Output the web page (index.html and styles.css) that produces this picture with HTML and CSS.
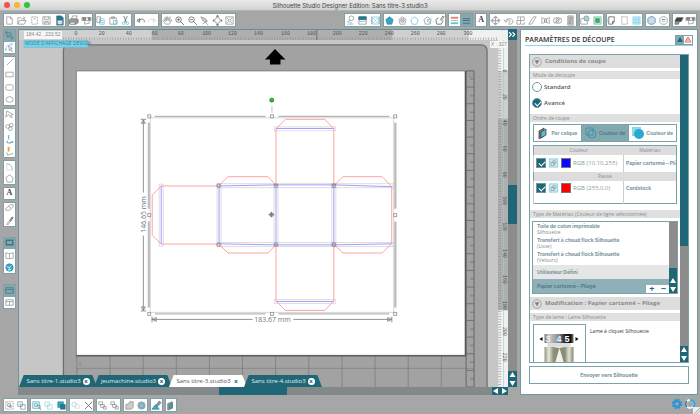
FILE: index.html
```html
<!DOCTYPE html>
<html lang="fr">
<head>
<meta charset="utf-8">
<title>Silhouette Studio Designer Edition: Sans titre-3.studio3</title>
<link rel="stylesheet" href="styles.css">
</head>
<body>
<svg class="defs" aria-hidden="true">
  <symbol id="new" viewBox="0 0 12 12"><path d="M3 2h4l2 2v6H3zM7 2v2h2"/></symbol>
  <symbol id="open" viewBox="0 0 12 12"><path d="M2 10V3h3l1 1h3v2M2 10l2-4h7l-2 4zM8 2l2 1"/></symbol>
  <symbol id="card" viewBox="0 0 12 12"><path d="M3 2h6v8H3z" stroke-dasharray="2 1"/><path d="M5 4h2"/></symbol>
  <symbol id="save" viewBox="0 0 12 12"><path d="M2 2h8v8H2zM4 2v3h4V2M4 10V7h4v3"/><path class="cy" d="M4 8h4"/></symbol>
  <symbol id="sd" viewBox="0 0 12 12"><path class="ft" d="M3 1h5l2 2v8H3z"/><path class="fw" d="M4 6h5v4H4z"/><path class="cy" d="M5 8h3"/></symbol>
  <symbol id="print" viewBox="0 0 12 12"><path class="fg" d="M1 6l2-2h7l1 1v3l-2 2H2z"/><path class="fw" d="M4 4l1-3h5L9 4zM3 8h5l-1 2H2z"/></symbol>
  <symbol id="cutter" viewBox="0 0 12 12"><path d="M1 3h10v3H1zM4 6v4l5-1V6"/><path class="fg" d="M2 3h3v2H2zM8 3h2v2H8z"/></symbol>
  <symbol id="copy" viewBox="0 0 12 12"><path d="M2 2h4v6H2z"/><path class="cy" d="M5 4h4l1 1v5H5zM6 6h3M6 8h3"/></symbol>
  <symbol id="paste" viewBox="0 0 12 12"><path d="M2 3h7v7H2zM4 2h3v2H4z"/><path class="cy" d="M6 6h4v4H6z"/></symbol>
  <symbol id="cut" viewBox="0 0 12 12"><path class="dk" d="M4 1l3 7M8 1L5 8"/><circle class="cy" cx="4" cy="9" r="1.4"/><circle class="cy" cx="8" cy="9" r="1.4"/></symbol>
  <symbol id="undo" viewBox="0 0 12 12"><path class="dk" d="M5 4L2 6l3 2zM4 6c4-3 7-1 6 2"/></symbol>
  <symbol id="redo" viewBox="0 0 12 12"><path class="lt" d="M7 4l3 2-3 2zM8 6C4 3 1 5 2 8"/></symbol>
  <symbol id="hand" viewBox="0 0 12 12"><path d="M4 10L1 6l1-1 2 2-1-4h1l1 3V2h1l.5 4L8 2l1 .5L8 7l2-2 .6.6L8 10z"/></symbol>
  <symbol id="zin" viewBox="0 0 12 12"><circle class="dk" cx="5" cy="5" r="3"/><path class="dk" d="M7 7l4 4M3.500 5h3M5 3.500v3"/></symbol>
  <symbol id="zout" viewBox="0 0 12 12"><circle class="dk" cx="5" cy="5" r="3"/><path class="dk" d="M7 7l4 4M3.500 5h3"/></symbol>
  <symbol id="zsel" viewBox="0 0 12 12"><path class="fl" d="M2 2l5 2 2 3-2 1-3-2z"/><path d="M7 8l3 3M9 6l-5 4"/></symbol>
  <symbol id="drag" viewBox="0 0 12 12"><circle cx="6" cy="6" r="3"/><path class="fg" d="M6 0l1 2H5zM6 12l1-2H5zM1 6l1-1v2zM11 6l-1-1v2z"/></symbol>
  <symbol id="fit" viewBox="0 0 12 12"><path d="M2 2h8v8H2zM3 3l2 2M9 3L7 5M3 9l2-2M9 9L7 7"/><circle cx="6" cy="6" r="1.500"/></symbol>
  <symbol id="lamp" viewBox="0 0 12 12"><circle cx="7" cy="3.500" r="2.500"/><path d="M6 6L3 7l2 2"/><path class="cy" d="M2 10h7M5 8l3 1"/></symbol>
  <symbol id="grad" viewBox="0 0 12 12"><path class="fw" d="M2 2h8v8H2z"/><path class="ft" d="M2 2h8v3H2z"/><path class="cy" d="M2 7h8"/></symbol>
  <symbol id="pat" viewBox="0 0 12 12"><path class="cy" d="M2 2h8v8H2zM2 6l4-4M2 10l8-8M6 10l4-4M2 2l8 8M6 2l4 4M2 6l4 4" stroke-width=".5"/><path d="M2 2v8M10 2v8"/></symbol>
  <symbol id="pfill" viewBox="0 0 12 12"><path class="fc" d="M6 2l4 3-1.500 5h-5L2 5z"/></symbol>
  <symbol id="pent" viewBox="0 0 12 12"><path d="M6 2l4 3-1.500 5h-5L2 5z"/></symbol>
  <symbol id="pcyan" viewBox="0 0 12 12"><path class="cy" d="M6 2l4 3-1.500 5h-5L2 5z"/></symbol>
  <symbol id="pdot" viewBox="0 0 12 12"><path d="M6 2l4 3-1.500 5h-5L2 5z"/><circle class="fl" cx="6" cy="6" r="2"/></symbol>
  <symbol id="pcur" viewBox="0 0 12 12"><path d="M6 2l4 3-1.500 5h-5L2 5z"/><path class="cy" d="M6 5l4 5M6 5v3M6 5h3"/></symbol>
  <symbol id="ppen" viewBox="0 0 12 12"><path class="dk" d="M5 3L2 5l1 5h5l2-4M7 5l3-4 1 1-3 4z"/></symbol>
  <symbol id="cols" viewBox="0 0 12 12"><path stroke="#f07a6a" stroke-width="2" d="M2 3h8"/><path stroke="#68cf78" d="M2 6h8"/><path class="cy" stroke-width="2" d="M2 9h8"/></symbol>
  <symbol id="lines" viewBox="0 0 12 12"><path stroke="#38616a" d="M2 4h8M2 6h8M2 9h8"/></symbol>
  <symbol id="move" viewBox="0 0 12 12"><path class="fl" d="M6 1l2 2H4zM6 11l2-2H4zM1 6l2-2v4zM11 6L9 4v4z"/><path d="M6 3v6M3 6h6"/></symbol>
  <symbol id="rot" viewBox="0 0 12 12"><path d="M3 7a4 3 0 1 1 3 3M1 5l2 3 2-2M5 5l3 2-2 2"/></symbol>
  <symbol id="scale" viewBox="0 0 12 12"><path d="M2 6h4v4H2zM6 2h4v4H6zM3 5V2h2M7 10h3V8"/></symbol>
  <symbol id="shear" viewBox="0 0 12 12"><path d="M2 10L7 2h3L5 10z"/></symbol>
  <symbol id="align" viewBox="0 0 12 12"><path d="M2 2v8M10 2v8M3 3l2 2v3L3 9M9 3L7 5v3l2 1M5 4h2v4H5z"/></symbol>
  <symbol id="dup" viewBox="0 0 12 12"><circle cx="4.500" cy="6" r="3"/><circle cx="7.500" cy="6" r="3"/><path d="M3 8l6-4"/></symbol>
  <symbol id="nest" viewBox="0 0 12 12"><path d="M3 1h6v10H3z"/><path class="fl" d="M4 2h2v3H4zM6 6h2v4H6zM7 2h1v3H7zM4 6h1v4H4z"/></symbol>
  <symbol id="weld" viewBox="0 0 12 12"><circle class="fb" cx="8" cy="4" r="3"/><path class="fw" d="M2 4h4v2h3v4H2z"/></symbol>
  <symbol id="offset" viewBox="0 0 12 12"><path fill="#e5ed75" stroke="#53c6c7" d="M2 2h8v8H2z"/><path class="fc" d="M4 4h4v4H4z"/></symbol>
  <symbol id="page" viewBox="0 0 12 12"><path class="dk" d="M3 10V2h6v5L7 10zM7 10V7h2"/><path class="cy" d="M2 4v4"/></symbol>
  <symbol id="marks" viewBox="0 0 12 12"><path d="M3 2h6v8H3z" stroke-dasharray="2 1"/></symbol>
  <symbol id="grid" viewBox="0 0 12 12"><path fill="#bfeaf7" stroke="#8fd8ee" d="M2 2h8v8H2zM5 2v8M8 2v8M2 5h8M2 8h8"/></symbol>
  <symbol id="mask" viewBox="0 0 12 12"><path fill="#c5dfef" stroke="#5b7895" d="M4 2h4l2 2v4l-2 2H4L2 8V4z"/></symbol>
  <symbol id="library" viewBox="0 0 12 12"><path d="M4 2h4l2 2v4l-2 2H4L2 8V4z"/><path class="cy" d="M4 7h4"/><path class="dk" d="M4 5h4"/></symbol>
  <symbol id="blade" viewBox="0 0 12 12"><path class="fk" d="M4 3h7L9 7H2z"/><path class="fg" d="M3 7h4l-1 3H2z"/></symbol>
  <symbol id="arrow" viewBox="0 0 12 12"><path d="M2 2l6 2-1 1 3 4-1 1-4-4-1 2z" stroke="#4b6e76"/></symbol>
  <symbol id="node" viewBox="0 0 12 12"><path class="cy" d="M2 9c0-5 2-6 7-6M2 7v3M7 2h3"/><path d="M5 4l4 3-2 .5 2 3-2-2-1 1z"/></symbol>
  <symbol id="line" viewBox="0 0 12 12"><path d="M3 9l7-7"/></symbol>
  <symbol id="rect" viewBox="0 0 12 12"><path d="M2 3.500h8v5H2z"/></symbol>
  <symbol id="rrect" viewBox="0 0 12 12"><rect x="2" y="3" width="8" height="6" rx="2"/></symbol>
  <symbol id="oval" viewBox="0 0 12 12"><ellipse cx="6" cy="6" rx="4" ry="3"/></symbol>
  <symbol id="poly" viewBox="0 0 12 12"><path d="M3 2l7 4-3 1 2 2H7L5 6 2 9z"/></symbol>
  <symbol id="curve" viewBox="0 0 12 12"><circle cx="8" cy="4.500" r="2"/><circle cx="4" cy="6" r="2"/><circle cx="7" cy="8.500" r="2"/></symbol>
  <symbol id="pen1" viewBox="0 0 12 12"><path class="cy" stroke-width="1.500" d="M5 6V1M3 9h1M6 10l4-2"/><path d="M3 7l1 3 6-1"/></symbol>
  <symbol id="pen2" viewBox="0 0 12 12"><path stroke="#f0a030" stroke-width="2" d="M5 6V1"/><path d="M3 7l1 3 6-2"/></symbol>
  <symbol id="arc" viewBox="0 0 12 12"><path d="M3 3c4 0 6 3 6 7"/><path class="lt" d="M3 3v7h6"/></symbol>
  <symbol id="erase" viewBox="0 0 12 12"><path d="M2 7l5-4h3v2L6 9H2zM5 5l3 2"/></symbol>
  <symbol id="knife" viewBox="0 0 12 12"><path class="fg" d="M6 6l3-4 1 1-3 4z"/><path d="M6 6l-3 4 1 1 3-4"/></symbol>
  <symbol id="win" viewBox="0 0 12 12"><path stroke="#47727b" stroke-width="1.500" d="M2.500 3.500h7v5h-7z"/></symbol>
  <symbol id="book" viewBox="0 0 12 12"><path d="M2 3l4 1 4-1v6l-4 .5L2 9zM6 4v5"/></symbol>
  <symbol id="store" viewBox="0 0 12 12"><circle class="fc" cx="6" cy="6" r="4"/><path stroke="#fff" d="M3 5l3 1 2-2M6 6l-1 3 3-1"/></symbol>
  <symbol id="one" viewBox="0 0 12 12"><path stroke="#47727b" d="M2 3h8v6H2zM2 5h8"/></symbol>
  <symbol id="two" viewBox="0 0 12 12"><path d="M2 3h8v6H2zM2 5h8M6 5v4"/></symbol>
  <symbol id="grp" viewBox="0 0 12 12"><path d="M2 2h8v8H2z" stroke-dasharray="2 1"/><path d="M4 4h3v3H4zM6 6h2v2H6z"/></symbol>
  <symbol id="ungrp" viewBox="0 0 12 12"><path d="M2 2h5v5H2zM5 5h5v5H5z"/><path class="cy" d="M1 5h9M5 2v8" stroke-dasharray="1 1"/></symbol>
  <symbol id="selall" viewBox="0 0 12 12"><path class="ct" d="M2 2h7v7H2zM4 4h3v3H4zM8 8l3 3M6 6h4v4"/></symbol>
  <symbol id="desel" viewBox="0 0 12 12"><path stroke="#9ed5e2" d="M2 2h5v5H2zM5 5h5v5H5z"/></symbol>
  <symbol id="selcol" viewBox="0 0 12 12"><path class="fc" d="M2 2h6v6H2z"/><path class="ft" d="M5 5h5v5H5z"/></symbol>
  <symbol id="merge" viewBox="0 0 12 12"><circle cx="4.500" cy="5" r="2.500" stroke="#9ed5e2"/><path class="lt" d="M6 4l4 1v4H6z"/></symbol>
  <symbol id="x" viewBox="0 0 12 12"><path class="dk" d="M2 2l8 8M10 2l-8 8"/></symbol>
  <symbol id="front" viewBox="0 0 12 12"><path d="M2 2h4v3H2zM4 5h4v3H4zM7 7h3v3H7z"/></symbol>
  <symbol id="shape" viewBox="0 0 12 12"><path class="fl" d="M2 5l3-1 1-2h4v6l-2 2H2z"/></symbol>
  <symbol id="disc" viewBox="0 0 12 12"><circle cx="6" cy="6" r="4" fill="#80cce0"/><path d="M4 4h4v4H4z"/></symbol>
  <symbol id="trace" viewBox="0 0 12 12"><path class="fc" d="M1 10l4-5 4 5z"/><path class="fg" d="M6 5l3-4 2 2-4 4z"/></symbol>
  <symbol id="layer" viewBox="0 0 12 12"><path class="fg" d="M3 4l5-2v7l-5 2z"/><path class="fc" d="M5 5l3-1v4L5 9z"/></symbol>
  <symbol id="sketch" viewBox="0 0 12 12"><path class="cy" d="M1 1h10v10H1z" fill="#c9edf7"/><path d="M3 5h4v4H3z"/><circle cx="7" cy="5" r="2"/></symbol>
</svg>

<header class="titlebar">
  <div class="lights"><i class="red"></i><i class="yellow"></i><i class="green"></i></div>
  <h1>Silhouette Studio Designer Edition: Sans titre-3.studio3</h1>
</header>

<nav class="toolbar" aria-label="Outils principaux">
  <div class="half left">
    <div class="group n5">
      <button aria-label="Nouveau"><svg><use href="#new"/></svg></button><button aria-label="Ouvrir"><svg><use href="#open"/></svg></button><button aria-label="Carte"><svg><use href="#card"/></svg></button><button aria-label="Enregistrer"><svg><use href="#save"/></svg></button><button aria-label="Carte SD"><svg><use href="#sd"/></svg></button>
    </div>
    <div class="group n2"><button aria-label="Imprimer"><svg><use href="#print"/></svg></button><button aria-label="Découper"><svg><use href="#cutter"/></svg></button></div>
    <div class="group n3"><button aria-label="Copier"><svg><use href="#copy"/></svg></button><button aria-label="Coller"><svg><use href="#paste"/></svg></button><button aria-label="Couper"><svg><use href="#cut"/></svg></button></div>
    <div class="group n2"><button aria-label="Annuler"><svg><use href="#undo"/></svg></button><button aria-label="Rétablir"><svg><use href="#redo"/></svg></button></div>
    <div class="group n6">
      <button aria-label="Panoramique"><svg><use href="#hand"/></svg></button><button aria-label="Zoom avant"><svg><use href="#zin"/></svg></button><button aria-label="Zoom arrière"><svg><use href="#zout"/></svg></button><button aria-label="Zoom sélection"><svg><use href="#zsel"/></svg></button><button aria-label="Zoom glissé"><svg><use href="#drag"/></svg></button><button aria-label="Ajuster"><svg><use href="#fit"/></svg></button>
    </div>
  </div>
  <div class="half right">
    <div class="group n3"><button aria-label="Couleur"><svg><use href="#lamp"/></svg></button><button aria-label="Dégradé"><svg><use href="#grad"/></svg></button><button aria-label="Motif"><svg><use href="#pat"/></svg></button></div>
    <div class="group n5">
      <button aria-label="Remplissage"><svg><use href="#pfill"/></svg></button><button aria-label="Contour"><svg><use href="#pdot"/></svg></button><button aria-label="Ligne"><svg><use href="#pcyan"/></svg></button><button aria-label="Sélection"><svg><use href="#pcur"/></svg></button><button aria-label="Crayon"><svg><use href="#ppen"/></svg></button>
    </div>
    <div class="group n2"><button aria-label="Couleur de ligne"><svg><use href="#cols"/></svg></button><button class="on" aria-label="Style de ligne"><svg><use href="#lines"/></svg></button></div>
    <div class="group n1"><button class="letter">A</button></div>
    <div class="group n7">
      <button aria-label="Déplacer"><svg><use href="#move"/></svg></button><button aria-label="Pivoter"><svg><use href="#rot"/></svg></button><button aria-label="Échelle"><svg><use href="#scale"/></svg></button><button aria-label="Cisailler"><svg><use href="#shear"/></svg></button><button aria-label="Aligner"><svg><use href="#align"/></svg></button><button aria-label="Répliquer"><svg><use href="#dup"/></svg></button><button aria-label="Imbriquer"><svg><use href="#nest"/></svg></button>
    </div>
    <div class="group n2"><button aria-label="Modifier"><svg><use href="#weld"/></svg></button><button aria-label="Décalage"><svg><use href="#offset"/></svg></button></div>
    <div class="group n3"><button aria-label="Page"><svg><use href="#page"/></svg></button><button aria-label="Repères"><svg><use href="#marks"/></svg></button><button aria-label="Grille"><svg><use href="#grid"/></svg></button></div>
    <div class="group n2"><button aria-label="Pochoir"><svg><use href="#mask"/></svg></button><button aria-label="Bibliothèque"><svg><use href="#library"/></svg></button></div>
    <div class="group n2"><button aria-label="Lame"><svg><use href="#blade"/></svg></button><button aria-label="Envoyer"><svg><use href="#cutter"/></svg></button></div>
  </div>
</nav>

<main>
  <nav class="side" aria-label="Outils de dessin">
    <div class="group n2"><button class="on" aria-label="Sélectionner"><svg><use href="#arrow"/></svg></button><button aria-label="Points"><svg><use href="#node"/></svg></button></div>
    <div class="group n4"><button aria-label="Ligne"><svg><use href="#line"/></svg></button><button aria-label="Rectangle"><svg><use href="#rect"/></svg></button><button aria-label="Rectangle arrondi"><svg><use href="#rrect"/></svg></button><button aria-label="Ellipse"><svg><use href="#oval"/></svg></button></div>
    <div class="group n4"><button aria-label="Polygone"><svg><use href="#poly"/></svg></button><button aria-label="Courbe"><svg><use href="#curve"/></svg></button><button aria-label="Main levée"><svg><use href="#pen1"/></svg></button><button aria-label="Main levée lissée"><svg><use href="#pen2"/></svg></button></div>
    <div class="group n2"><button aria-label="Arc"><svg><use href="#arc"/></svg></button><button aria-label="Pentagone"><svg><use href="#pent"/></svg></button></div>
    <div class="group n1"><button class="letter">A</button></div>
    <div class="group n2"><button aria-label="Gomme"><svg><use href="#erase"/></svg></button><button aria-label="Couteau"><svg><use href="#knife"/></svg></button></div>
    <div class="group n3 apart"><button class="on" aria-label="Dessin"><svg><use href="#win"/></svg></button><button aria-label="Livre"><svg><use href="#book"/></svg></button><button aria-label="Boutique"><svg><use href="#store"/></svg></button></div>
    <div class="group n2 apart"><button class="on" aria-label="Une vue"><svg><use href="#one"/></svg></button><button aria-label="Deux vues"><svg><use href="#two"/></svg></button></div>
  </nav>

  <section class="work">
    <div class="stage">
      <svg class="canvas" viewBox="19 29 490 359" preserveAspectRatio="xMinYMin slice">
        <defs>
          <pattern id="tick" x="76" y="36" width="2.615" height="4" patternUnits="userSpaceOnUse"><path d="M.5 1.500v3" stroke="#888" stroke-width=".6"/></pattern>
          <pattern id="vtick" x="499" y="71" width="4" height="2.615" patternUnits="userSpaceOnUse"><path d="M0 .5h3" stroke="#888" stroke-width=".6"/></pattern>
          <pattern id="mat" x="76.500" y="336.300" width="33.200" height="33.200" patternUnits="userSpaceOnUse"><path d="M0 0v33.200M0 33.200h33.200" stroke="#707070" stroke-width="1.200"/></pattern>
          <pattern id="edge" x="467" y="71" width="8" height="16.700" patternUnits="userSpaceOnUse"><path d="M0 16.200h8M4 8h4" stroke="#666" stroke-width=".8"/></pattern>
        </defs>
        <path fill="#c6c6c6" d="M19 29h490v359H19z"/>
        <path fill="#a2a2a2" stroke="#6f6f6f" stroke-width="1.300" d="M63.500 390V51q0-6 6-6H482q6 0 6 6v339z"/>
        <path fill="url(#mat)" d="M76 357h399v31H76z"/>
        <path fill="url(#edge)" stroke="#666" d="M467 71h8v317h-8z"/>
        <path fill="#fff" stroke="#777" stroke-width=".8" d="M76.500 71H466v285H76.500z"/>
        <path stroke="#555" stroke-width="1.200" d="M76 356.500h390.500V71"/>
        <path fill="#000" d="M275.500 49l10.500 10.500h-5v5h-10.500v-5h-5z"/>

        <g class="ruler">
          <path fill="#d0d0d0" d="M19 29h490v11H19z"/>
          <path fill="#afafaf" d="M152 29h241v11H152z"/>
          <path fill="#f0f0f0" d="M470 29h39v11h-39zM499 40h10v31h-10z"/>
          <path fill="#d0d0d0" d="M499 71h10v48h-10z"/>
          <path fill="#afafaf" d="M499 119h10v192h-10z"/>
          <path fill="#f0f0f0" d="M499 311h10v77h-10z"/>
          <path fill="url(#tick)" d="M62 36h436v4H62z"/>
          <path fill="url(#vtick)" d="M499 42h4v346h-4z"/>
          <path stroke="#9cc" stroke-width=".6" d="M504.500 40v348"/>
          <path stroke="#5d909a" d="M19 29.500h490"/>
          <path stroke="#444" stroke-width=".6" d="M317.500 30v10"/>
          <g class="num"><text x="76" y="35">0</text><text x="102" y="35">20</text><text x="129" y="35">40</text><text x="155" y="35">60</text><text x="181" y="35">80</text><text x="207" y="35">100</text><text x="233" y="35">120</text><text x="259" y="35">140</text><text x="286" y="35">160</text><text x="312" y="35">180</text><text x="338" y="35">200</text><text x="364" y="35">220</text><text x="390" y="35">240</text><text x="416" y="35">260</text><text x="442" y="35">280</text><text x="469" y="35">300</text></g>
          <g class="num"><text transform="translate(504 71)rotate(90)">0</text><text transform="translate(504 97)rotate(90)">20</text><text transform="translate(504 123)rotate(90)">40</text><text transform="translate(504 149)rotate(90)">60</text><text transform="translate(504 175)rotate(90)">80</text><text transform="translate(504 201)rotate(90)">100</text><text transform="translate(504 227)rotate(90)">120</text><text transform="translate(504 254)rotate(90)">140</text><text transform="translate(504 280)rotate(90)">160</text><text transform="translate(504 306)rotate(90)">180</text><text transform="translate(504 332)rotate(90)">200</text><text transform="translate(504 358)rotate(90)">220</text></g>
          <path fill="#f7f7f7" d="M24 31h38v8H24z"/><text class="pos" x="26" y="36.500">184.42 , 233.52</text>
          <path fill="#f7f7f7" d="M491 41h17v7h-17z"/><text class="pos" x="492" y="46">X : 327</text>
          <path fill="#7bd0e6" stroke="#5fb9d1" stroke-width=".5" d="M24 40.500h64v7H24z"/><text class="mode" x="25" y="45.500">MODE D'AFFICHAGE DESIGN</text>
        </g>

        <g class="select">
          <path stroke="#ccc" stroke-width=".8" d="M150.500 118h244v195h-244z"/>
          <path stroke="#999" stroke-width=".9" d="M155 116.500h111M279 116.500h111M155 314.500h111M279 314.500h111"/>
          <path stroke="#c4c4c4" stroke-width="1.800" d="M149.500 123v86M149.500 222v86M395.800 123v86M395.800 222v86"/>
          <path stroke="#999" stroke-width=".6" d="M148.500 123v86M148.500 222v86M396.800 123v86M396.800 222v86M272.500 106v7"/>
        </g>
        <g class="aura"><path d="M275 127h61v4h-61zM275 300h61v4h-61zM159.500 184.500h4v62h-4zM217.500 184h4v63h-4zM274.500 184h4v63h-4zM332.500 184h4v63h-4zM217.500 184h119v4h-119zM217.500 243h119v4h-119zM332.500 184h61.500v4h-61.500zM332.500 243h61.500v4h-61.500z"/></g>
        <path class="cutline" d="M276.500 186v-57l9.500-9.500h39.500l9 9.500v57M276.500 245v56.500L286 311h39.500l9-9.500V245M219 186.300h-57.500l-9 9.200v40l9 9H219M219 186.300l9.500-9.300h40l8.500 9M219 244.500l9.500 9h40l8.500-9M334.500 186l9-9H383l9.500 10v57l-9.500 9.500h-39.500l-9-9"/>
        <path class="fold" d="M276.500 128.700h58M276.500 302h58M161.500 186.300v58M219.500 186.300v58M276.500 185.200v60M334.500 185.200v60M219 186.300l57.500-1.100h58l58 1.800M219 244.300l57.500 1h58l58-1"/>
        <g class="corner"><path d="M217.500 184.500h3v3h-3zM275 184.500h3v3h-3zM333 184.500h3v3h-3zM217.500 243.500h3v3h-3zM275 243.500h3v3h-3zM333 243.500h3v3h-3z"/></g>
        <g class="handle"><path d="M148 115h3v3h-3zM271 115h3v3h-3zM394.500 115h3v3h-3zM148 214h3v3h-3zM394.500 214h3v3h-3zM148 313h3v3h-3zM271 313h3v3h-3zM394.500 313h3v3h-3z"/></g>
        <circle cx="272.300" cy="100.300" r="2" fill="#00dd10" stroke="#3c653c" stroke-width=".8"/>
        <path fill="#bbb" stroke="#666" stroke-width=".7" d="M272 212.500l2.500 2.500-2.500 2.500-2.500-2.500zM272 212.500v5M269.500 215h5"/>
        <g class="dim"><path d="M143.600 120v73M143.600 236v75M141 119.500h5.500M141 311.500h5.500M143.600 120l-2 3.500h4zM143.600 311l-2-3.500h4zM152 320h101M294 320h98M152.300 317v6M392.600 317v6M152.500 320l4-2v4zM392.500 320l-4-2v4z"/>
          <text x="273" y="322.500">183.67 mm</text><text transform="translate(146 215)rotate(-90)">146.65 mm</text></g>
        <text class="pos" x="79" y="367">9</text>
        <text class="pos" x="469" y="77">12</text>
      </svg>
      <nav class="tabs" aria-label="Documents">
        <a href="#">Sans titre-1.studio3<b>x</b></a><a href="#">jeumachine.studio3<b>x</b></a><a href="#" class="current">Sans titre-3.studio3<b>x</b></a><a href="#">Sans titre-4.studio3<b>x</b></a>
      </nav>
    </div>
    <div class="vscroll">
      <button class="arr" aria-label="Replier"><svg viewBox="0 0 8 8"><path d="M1 2l2 2-2 2M4 2l2 2-2 2"/></svg></button>
      <i class="track"></i><i class="thumb"></i><i class="track rest"></i>
      <button class="arr" aria-label="Haut"><svg viewBox="0 0 8 8"><path class="tri" d="M4 1l3 5H1z"/></svg></button>
      <button class="arr" aria-label="Bas"><svg viewBox="0 0 8 8"><path class="tri" d="M4 7l3-5H1z"/></svg></button>
    </div>
    <div class="hscroll">
      <i class="track"></i><i class="thumb"></i><i class="track rest"></i>
      <button class="arr" aria-label="Gauche"><svg viewBox="0 0 8 8"><path class="tri" d="M1 4l5-3v6z"/></svg></button>
      <button class="arr" aria-label="Droite"><svg viewBox="0 0 8 8"><path class="tri" d="M7 4L2 1v6z"/></svg></button>
    </div>
  </section>

  <aside class="panel">
    <header class="phead">
      <h2>PARAMÈTRES DE DÉCOUPE</h2>
      <div class="modes">
        <button class="on" aria-label="Avancé"><svg viewBox="0 0 8 8"><path d="M4 1l3 5H1z" fill="#1f6676"/></svg></button><button aria-label="Simple"><svg viewBox="0 0 8 8"><path d="M4 1l3 5H1zM2.500 4h3" fill="none" stroke="#f06060"/></svg></button>
      </div>
    </header>
    <div class="pbox">
      <div class="pbody">
        <h3><svg viewBox="0 0 10 10"><circle cx="5" cy="5" r="4.300"/><path d="M3 3.500h4L5 7z"/></svg>Conditions de coupe</h3>
        <h4>Mode de découpe</h4>
        <label class="radio"><input type="radio" name="mode">Standard</label>
        <label class="radio"><input type="radio" name="mode" checked>Avancé</label>
        <h4 class="order">Ordre de coupe</h4>
        <div class="segments">
          <button><svg viewBox="0 0 12 12"><path fill="#777" stroke="#444" stroke-width=".8" d="M2 4l5-3v8l-5 3z"/><path fill="#55bddb" stroke="#444" stroke-width=".8" d="M4 5l5-3v6l-5 3z"/></svg>Par calque</button>
          <button class="on"><svg viewBox="0 0 12 12"><path fill="none" stroke="#3e92a5" d="M1 1h7v7H1z"/><circle cx="7" cy="7" r="4" fill="none" stroke="#3e92a5"/></svg>Couleur de</button>
          <button><svg viewBox="0 0 12 12"><path fill="#8bd8ee" d="M0 0h9v9H0z"/><circle cx="7" cy="7" r="5" fill="#29a9d0"/></svg>Couleur de</button>
        </div>
        <table>
          <thead><tr><th>Couleur</th><th>Matériau</th></tr></thead>
          <tbody>
            <tr class="r1"><td><div class="cell"><input type="checkbox" checked aria-label="RGB (10,10,255)"><svg viewBox="0 0 12 12" class="sk"><use href="#sketch"/></svg><i class="blue"></i>RGB (10,10,255)</div></td><td><strong>Papier cartonné – Pliage</strong></td></tr>
            <tr><th colspan="2" class="pause">Pause</th></tr>
            <tr class="r2"><td><div class="cell"><input type="checkbox" checked aria-label="RGB (255,0,0)"><svg viewBox="0 0 12 12" class="sk"><use href="#sketch"/></svg><i class="redc"></i>RGB (255,0,0)</div></td><td><strong>Cardstock</strong></td></tr>
          </tbody>
        </table>
        <h4 class="type">Type de Matériau (Couleur de ligne sélectionnée)</h4>
        <div class="list">
          <ul>
            <li><strong>Toile de coton imprimable</strong><span>Silhouette</span></li>
            <li><strong>Transfert à chaud flock Silhouette</strong><span>(Lisse)</span></li>
            <li><strong>Transfert à chaud flock Silhouette</strong><span>(Velours)</span></li>
            <li class="user"><strong>Utilisateur Défini</strong></li>
            <li class="picked"><strong>Papier cartonné – Pliage</strong></li>
          </ul>
          <div class="pm"><button>+</button><button>−</button></div>
          <div class="lscroll"><i class="track"></i><i class="thumb"></i>
            <button class="arr" aria-label="Haut"><svg viewBox="0 0 8 8"><path class="tri" d="M4 1l3 5H1z"/></svg></button>
            <button class="arr" aria-label="Bas"><svg viewBox="0 0 8 8"><path class="tri" d="M4 7l3-5H1z"/></svg></button></div>
        </div>
        <h3><svg viewBox="0 0 10 10"><circle cx="5" cy="5" r="4.300"/><path d="M3 3.500h4L5 7z"/></svg>Modification : Papier cartonné – Pliage</h3>
        <h4>Type de lame : Lame Silhouette</h4>
        <div class="blade">
          <svg viewBox="0 0 52 40" preserveAspectRatio="xMidYMin slice">
            <defs>
              <linearGradient id="cap"><stop offset="0" stop-color="#777"/><stop offset=".15" stop-color="#ccc"/><stop offset=".5" stop-color="#888"/><stop offset=".7" stop-color="#222"/><stop offset=".9" stop-color="#111"/><stop offset="1" stop-color="#777"/></linearGradient>
              <linearGradient id="tube"><stop offset="0" stop-color="#92967c"/><stop offset=".15" stop-color="#e8e8dd"/><stop offset=".3" stop-color="#92967c"/><stop offset=".5" stop-color="#f4f4f0"/><stop offset=".7" stop-color="#92967c"/><stop offset=".85" stop-color="#e2e2d5"/><stop offset="1" stop-color="#84876c"/></linearGradient>
            </defs>
            <path fill="url(#cap)" d="M11 9h29v9H11z"/><path fill="#ddd" d="M14 18h23v5H14z"/><path fill="url(#tube)" d="M11 22h29v18H11z"/>
            <path fill="#8b8e77" d="M20 23h12v17H20z"/><path fill="#f2f2ea" d="M26 23l5 17H21z"/>
            <text x="12" y="17" fill="#eee">3</text><text x="23" y="17" fill="#dff0ff">4</text><text x="31" y="17" fill="#fff">5</text>
            <path d="M9 12l-3 2 3 2zM42 12l3 2-3 2z"/>
          </svg>
          <p>Lame à cliquet Silhouette</p>
        </div>
      </div>
      <div class="pscroll"><i class="thumb"></i><i class="track"></i>
        <button class="arr" aria-label="Haut"><svg viewBox="0 0 8 8"><path class="tri" d="M4 1l3 5H1z"/></svg></button>
        <button class="arr" aria-label="Bas"><svg viewBox="0 0 8 8"><path class="tri" d="M4 7l3-5H1z"/></svg></button></div>
    </div>
    <button class="send">Envoyer vers Silhouette</button>
  </aside>
</main>

<footer>
  <nav class="bottom" aria-label="Arrangement">
    <div class="group n2"><button aria-label="Grouper"><svg><use href="#grp"/></svg></button><button aria-label="Dégrouper"><svg><use href="#ungrp"/></svg></button></div>
    <div class="group n3"><button aria-label="Tout sélectionner"><svg><use href="#selall"/></svg></button><button aria-label="Désélectionner"><svg><use href="#desel"/></svg></button><button aria-label="Sélection par couleur"><svg><use href="#selcol"/></svg></button></div>
    <div class="group n2"><button aria-label="Dupliquer"><svg><use href="#merge"/></svg></button><button aria-label="Supprimer"><svg><use href="#x"/></svg></button></div>
    <div class="group n2"><button aria-label="Avant"><svg><use href="#front"/></svg></button><button aria-label="Arrière"><svg><use href="#front"/></svg></button></div>
    <div class="group n2"><button aria-label="Souder"><svg><use href="#shape"/></svg></button><button aria-label="Disque"><svg><use href="#disc"/></svg></button></div>
    <div class="group n1"><button aria-label="Vectoriser"><svg><use href="#trace"/></svg></button></div>
    <div class="group n1"><button aria-label="Calques"><svg><use href="#layer"/></svg></button></div>
  </nav>
  <div class="status">
    <button aria-label="Préférences"><svg viewBox="0 0 12 12"><circle cx="6" cy="6" r="4" fill="none" stroke="#2c94d3" stroke-width="2.500" stroke-dasharray="2 1.140"/><circle cx="6" cy="6" r="2.800" fill="none" stroke="#2c94d3" stroke-width="2"/></svg></button>
    <button aria-label="Thème"><svg viewBox="0 0 12 12"><circle cx="6" cy="6" r="4" fill="none" stroke="#eaf6fb" stroke-width="2"/><path d="M6 2a4 4 0 0 1 3 7" fill="none" stroke="#2ca9dc" stroke-width="2"/><path d="M3 3a4 4 0 0 0 0 6" fill="none" stroke="#356f9c" stroke-width="1.500"/></svg></button>
    <svg class="grip" viewBox="0 0 7 7"><path d="M0 0h7v7H0z" fill="#eee"/><path d="M1 7l6-6M3.500 7L7 3.500" stroke="#aaa"/></svg>
  </div>
</footer>
</body>
</html>
```
FILE: styles.css
```css
* { box-sizing: border-box; }
body {
  margin: 0;
  height: 100vh;
  display: flex;
  flex-direction: column;
  overflow: hidden;
  background: #a6a6a6;
  font: 5px/6px "Open Sans", "Noto Sans", sans-serif;
  color: #8a8a8a;
}
h1, h2, h3, h4, p, ul { margin: 0; padding: 0; font: inherit; }
button { margin: 0; padding: 0; border: 0; background: #fff; font: inherit; color: inherit; }
svg { display: block; }
.defs { position: absolute; width: 0; height: 0; }
i { display: block; }

/* shared strokes and fills for the tool icons */
symbol { fill: none; stroke: #8f8f8f; stroke-width: 0.8px; overflow: visible; }
.cy { stroke: #62c3dc; }
.ct { stroke: #4798ab; }
.dk { stroke: #555; }
.lt { stroke: #d4d4d4; }
.fg { fill: #999; stroke: #666; }
.fl { fill: #ccc; }
.fk { fill: #444; stroke: #555; }
.fw { fill: #fff; }
.fb { fill: #9fd4e2; }
.fc { fill: #36a6c4; stroke: #2f8ba5; }
.ft { fill: #237a95; stroke: #2b6b7c; }

.titlebar {
  position: relative;
  flex: none;
  height: 11px;
  background: linear-gradient(#eaeaea, #d2d2d2);
  border-bottom: 1px solid #b4b4b4;
}
.titlebar h1 { text-align: center; font: 6px/11px Inter, sans-serif; color: #444; }
.lights { position: absolute; left: 4px; top: 2px; display: flex; gap: 4px; }
.lights i { width: 6px; height: 6px; border-radius: 50%; }
.red { background: #f25248; }
.yellow { background: #f7b62c; }
.green { background: #32c33f; }

.toolbar { flex: none; display: flex; justify-content: space-between; padding: 2px 3px; height: 18px; }
.half, .bottom { display: flex; gap: 2px; }
.left { flex: 0 1 233px; }
.right { flex: 0 1 353px; }
.group { display: flex; min-width: 0; min-height: 0; background: #fff; outline: 1px solid #7fa0a7; outline-offset: -1px; height: 14px; }
.group button { flex: 1 1 0; min-width: 0; min-height: 0; display: flex; align-items: center; justify-content: center; background: none; overflow: hidden; }
.group svg { width: 11px; height: 11px; flex: none; }
.group button.on { background: #84a8b0; }
.n1 { flex: 1; }
.n2 { flex: 2; }
.n3 { flex: 3; }
.n4 { flex: 4; }
.n5 { flex: 5; }
.n6 { flex: 6; }
.n7 { flex: 7; }
.group .letter { font: bold 8px/10px "Liberation Serif", serif; color: #444; }

main { flex: 1; min-height: 0; display: grid; grid-template-columns: 18px minmax(0, 1fr) 178px; grid-template-rows: minmax(0, 1fr); column-gap: 2px; padding-right: 2px; }
.side { display: flex; flex-direction: column; gap: 2px; height: 280px; padding-left: 3px; width: 16px; }
.side .group { flex-direction: column; height: auto; }
.side .apart { margin-top: 8px; }

.work {
  display: grid;
  grid-template-columns: minmax(0, 1fr) 9px;
  grid-template-rows: minmax(0, 1fr) 8px;
  border-left: 1px solid #6b969e;
  margin-left: -2px;
  margin-right: 1px;
}
.stage { position: relative; overflow: hidden; }
.canvas { width: 100%; height: 100%; fill: none; }
.num text { font: 5px "Liberation Mono", monospace; fill: #555; text-anchor: middle; }
.pos { font: 5px "Liberation Sans", sans-serif; fill: #888; }
.mode { font: 5px "Open Sans", sans-serif; fill: #2f7f94; }
.aura { stroke: #bbb; stroke-width: 0.5px; }
.cutline { stroke: #ff8c8c; stroke-width: 0.8px; }
.fold { stroke: #8585ff; stroke-width: 0.8px; }
.corner { stroke: #666; stroke-width: 0.5px; }
.handle { fill: #fff; stroke: #777; stroke-width: 0.7px; }
.dim { stroke: #777; stroke-width: 0.8px; }
.dim text { font: 7px "Open Sans", sans-serif; fill: #777; stroke: none; text-anchor: middle; }

.tabs { position: absolute; left: 0; bottom: 0; display: flex; height: 12px; }
.tabs a {
  display: flex;
  align-items: center;
  justify-content: center;
  gap: 2px;
  width: 78px;
  margin-right: -3px;
  background: #1f6676;
  clip-path: polygon(6% 0, 94% 0, 100% 100%, 0 100%);
  color: #e4eef0;
  font: 6px/12px "Open Sans", sans-serif;
  text-decoration: none;
}
.tabs .current { background: #fff; color: #555; }
.tabs b { width: 7px; height: 7px; border-radius: 50%; background: #fff; color: #1f6676; font-size: 6px; line-height: 6px; text-align: center; }

.track { flex: 1; background: #8c8c8c; }
.thumb { background: #1f6676; }
.arr { flex: none; height: 8px; background: #1f6676; }
.arr svg { width: 100%; height: 100%; fill: none; stroke: #fff; }
.arr .tri { fill: #fff; stroke: none; }
.vscroll, .lscroll, .pscroll { display: flex; flex-direction: column; }
.vscroll .arr:first-child { height: 11px; }
.vscroll .track { flex: 145; }
.vscroll .thumb { flex: 40; }
.vscroll .rest { flex: 147; }
.hscroll { display: flex; grid-column: 1 / 3; padding-right: 9px; }
.hscroll .track { flex: 201; background: #83898b; }
.hscroll .thumb { flex: 68; }
.hscroll .rest { flex: 206; }
.hscroll .arr { width: 8px; }

.panel { display: flex; flex-direction: column; background: #fff; border: 1px solid #6d98a0; padding: 4px 8px 10px; }
.phead { flex: none; display: flex; justify-content: space-between; align-items: center; height: 12px; margin: 0 -4px 8px; border-bottom: 1px solid #8ed2e2; }
.phead h2 { font: 600 7px/9px "Open Sans", sans-serif; color: #333; }
.modes { display: flex; border: 1px solid #7fa0a7; }
.modes button { width: 8px; height: 8px; }
.modes .on { background: #84a8b0; }
.pbox { flex: 1; min-height: 0; display: flex; border: 1px solid #7ba2a9; }
.pbody { flex: 1; min-width: 0; overflow: hidden; display: flex; flex-direction: column; }
.pbody > * { flex: none; }
.pscroll { width: 8px; }
.pscroll .thumb { flex: 192; }
.pscroll .track { flex: 101; }
h3 { display: flex; align-items: center; gap: 3px; height: 13px; margin-bottom: 3px; padding-left: 2px; background: #ddd; font: bold 6px/13px "Open Sans", sans-serif; }
h3 svg { width: 10px; height: 10px; fill: none; stroke: #999; stroke-width: 0.8px; }
h3 path { fill: #777; }
h4 { height: 8px; padding-left: 3px; background: #e0e0e0; font: 5px/8px "Open Sans", sans-serif; }
.radio { display: flex; align-items: center; gap: 2px; height: 16px; padding-left: 2px; font: 600 6px/16px "Open Sans", sans-serif; color: #555; }
input { appearance: none; margin: 0; width: 10px; height: 10px; background: #fff; border: 1px solid #6d98a0; }
input:checked { background: #1f6676; }
input:checked::after { content: ""; display: block; width: 5px; height: 3px; margin: 2px 0 0 2px; border: solid #fff; border-width: 0 0 1px 1px; rotate: -45deg; }
.radio input { border-radius: 50%; }
.order { margin-top: 3px; }
.segments { display: flex; height: 18px; margin: 2px 3px 3px; border: 1px solid #7ba2a9; }
.segments button { flex: 1; min-width: 0; display: flex; align-items: center; justify-content: center; gap: 2px; overflow: hidden; white-space: nowrap; border-right: 1px solid #7ba2a9; font: bold 5px/6px Inter, sans-serif; color: #7a979e; }
.segments button:last-child { border-right: 0; }
.segments svg { width: 12px; height: 12px; flex: none; }
.segments .on { background: #84a8b0; color: #4f7e89; }
table { table-layout: fixed; width: 144px; margin: 0 3px 6px; border-collapse: collapse; border: 1px solid #7ba2a9; line-height: 6px; color: #8a9da2; }
th { height: 9px; padding: 0; background: #ddd; font-weight: 400; font-size: 5px; color: #8a8a8a; }
th:first-child { width: 90px; }
td { height: 17px; padding: 0 2px; overflow: hidden; white-space: nowrap; border-left: 1px solid #ccc; }
.r2 td { height: 23px; vertical-align: top; padding-top: 2px; }
.r2 strong { line-height: 10px; }
.cell { display: flex; align-items: center; gap: 2px; font-size: 6px; }
.cell .sk { width: 11px; height: 10px; }
.cell i { width: 10px; height: 10px; border: 1px solid #777; }
.blue { background: #0a0aff; }
.redc { background: #f00; }
strong { font: bold 5px/6px Inter, sans-serif; color: #7694a0; }
.type { margin-bottom: 3px; }
.list { position: relative; display: flex; height: 73px; margin: 0 2px 3px; border: 1px solid #7ba2a9; }
ul { flex: 1; list-style: none; overflow: hidden; }
li { display: flex; flex-direction: column; height: 14px; padding: 1px 4px 0; }
li span { font-size: 5px; line-height: 6px; }
li.user { height: 15px; padding-top: 4px; background: #e6e6e6; border-top: 1px solid #fff; }
li.picked { padding-top: 4px; background: #90b0b7; }
li.picked strong { color: #4f7e89; }
.lscroll { width: 8px; }
.lscroll .track { flex: 46; }
.lscroll .thumb { flex: 9; }
.lscroll .arr { height: 8px; }
.pm { position: absolute; right: 8px; bottom: 0; display: flex; width: 23px; height: 8px; background: #fff; font: bold 9px/8px "Open Sans", sans-serif; color: #1f6676; }
.pm button { flex: 1; }
.blade { display: flex; gap: 4px; margin: 3px 3px 0; color: #333; }
.blade svg { width: 53px; height: 42px; border: 1px solid #7ba2a9; }
.blade text { font: bold 9px "Liberation Sans", sans-serif; }
.blade p { padding-top: 4px; }
.send { flex: none; height: 18px; margin-top: 3px; border: 1px solid #7ba2a9; font: bold 5px/16px Inter, sans-serif; color: #6f939c; }

footer { flex: none; display: flex; justify-content: space-between; height: 19px; padding: 3px 0 0 3px; }
.bottom { width: 174px; }
.bottom .group { height: 14px; }
.status { display: flex; gap: 1px; }
.status button { width: 12px; height: 12px; background: none; }
.status .grip { width: 7px; height: 7px; align-self: flex-end; margin-left: -4px; }
```
